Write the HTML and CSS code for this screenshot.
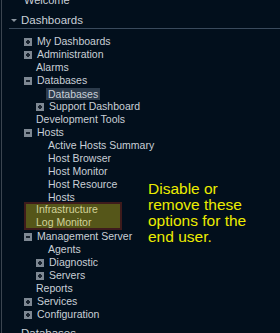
FILE: index.html
```html
<!DOCTYPE html>
<html>
<head>
<meta charset="utf-8">
<link rel="stylesheet" href="styles.css">
</head>
<body>
<div class="panel">
  <div class="row top welcome">Welcome</div>
  <div class="section">
    <div class="sec-head"><span class="tri"></span>Dashboards</div>
    <div class="tree">
      <div class="row l1"><span class="box plus"></span>My Dashboards</div>
      <div class="row l1"><span class="box plus"></span>Administration</div>
      <div class="row l1 noicon">Alarms</div>
      <div class="row l1"><span class="box minus"></span>Databases</div>
      <div class="row l2 noicon"><span class="sel">Databases</span></div>
      <div class="row l2"><span class="box plus"></span>Support Dashboard</div>
      <div class="row l1 noicon">Development Tools</div>
      <div class="row l1"><span class="box minus"></span>Hosts</div>
      <div class="row l2 noicon">Active Hosts Summary</div>
      <div class="row l2 noicon">Host Browser</div>
      <div class="row l2 noicon">Host Monitor</div>
      <div class="row l2 noicon">Host Resource</div>
      <div class="row l2 noicon">Hosts</div>
      <div class="marked">
        <div class="row">Infrastructure</div>
        <div class="row">Log Monitor</div>
      </div>
      <div class="row l1"><span class="box minus"></span>Management Server</div>
      <div class="row l2 noicon">Agents</div>
      <div class="row l2"><span class="box plus"></span>Diagnostic</div>
      <div class="row l2"><span class="box plus"></span>Servers</div>
      <div class="row l1 noicon">Reports</div>
      <div class="row l1"><span class="box plus"></span>Services</div>
      <div class="row l1"><span class="box plus"></span>Configuration</div>
    </div>
  </div>
  <div class="sec-head next">Databases</div>
  <div class="note">Disable or<br>remove these<br>options for the<br>end user.</div>
</div>
</body>
</html>
```
FILE: styles.css
```css
html, body {
  margin: 0;
  padding: 0;
  background: #020f1c;
  overflow: hidden;
}
.panel {
  position: relative;
  width: 278px;
  height: 333px;
  margin-left: 1px;
  border-left: 1px solid #3b4550;
  font-family: "Liberation Sans", Arial, sans-serif;
  font-size: 10.5px;
  color: #c9d0d7;
  overflow: hidden;
}
.row {
  height: 13px;
  line-height: 13px;
  white-space: nowrap;
  display: flex;
  align-items: center;
}
.welcome {
  margin-top: -6px;
  padding-left: 22px;
  font-size: 11px;
}
.sec-head {
  display: flex;
  align-items: center;
  height: 15px;
  line-height: 15px;
  margin-top: 6px;
  margin-left: 7px;
  padding-left: 12px;
  border-bottom: 1px solid #3a4a5c;
  font-size: 11.5px;
  position: relative;
}
.tri {
  position: absolute;
  left: 2px;
  top: 6px;
  width: 0;
  height: 0;
  border-left: 3px solid transparent;
  border-right: 3px solid transparent;
  border-top: 3px solid #8a949e;
}
.tree {
  padding-top: 6px;
}
.l1 { padding-left: 22px; }
.l2 { padding-left: 34px; }
.noicon { padding-left: 34px; }
.l2.noicon { padding-left: 46px; }
.box {
  width: 8px;
  height: 8px;
  background: #7e8893;
  margin-right: 5px;
  position: relative;
  flex: none;
}
.box::before {
  content: "";
  position: absolute;
  left: 2px;
  top: 3px;
  width: 4px;
  height: 2px;
  background: #1a2430;
}
.plus::after {
  content: "";
  position: absolute;
  left: 3px;
  top: 2px;
  width: 2px;
  height: 4px;
  background: #1a2430;
}
.sel {
  background: #2c3b4b;
  padding: 0 2px;
  margin-left: -2px;
  line-height: 12px;
}
.marked {
  width: 86px;
  margin-left: 22px;
  margin-top: -2px;
  margin-bottom: 0;
  padding: 1px 0 1px 12px;
  background: #555619;
  box-shadow: inset 0 0 0 2px #3e1b1c;
  color: #d2d39a;
}
.next {
  border-bottom: none;
  margin-top: 5px;
}
.note {
  position: absolute;
  left: 146px;
  top: 181px;
  font-family: "Liberation Sans", Arial, sans-serif;
  font-size: 15.5px;
  line-height: 16px;
  color: #ecec00;
}
```
